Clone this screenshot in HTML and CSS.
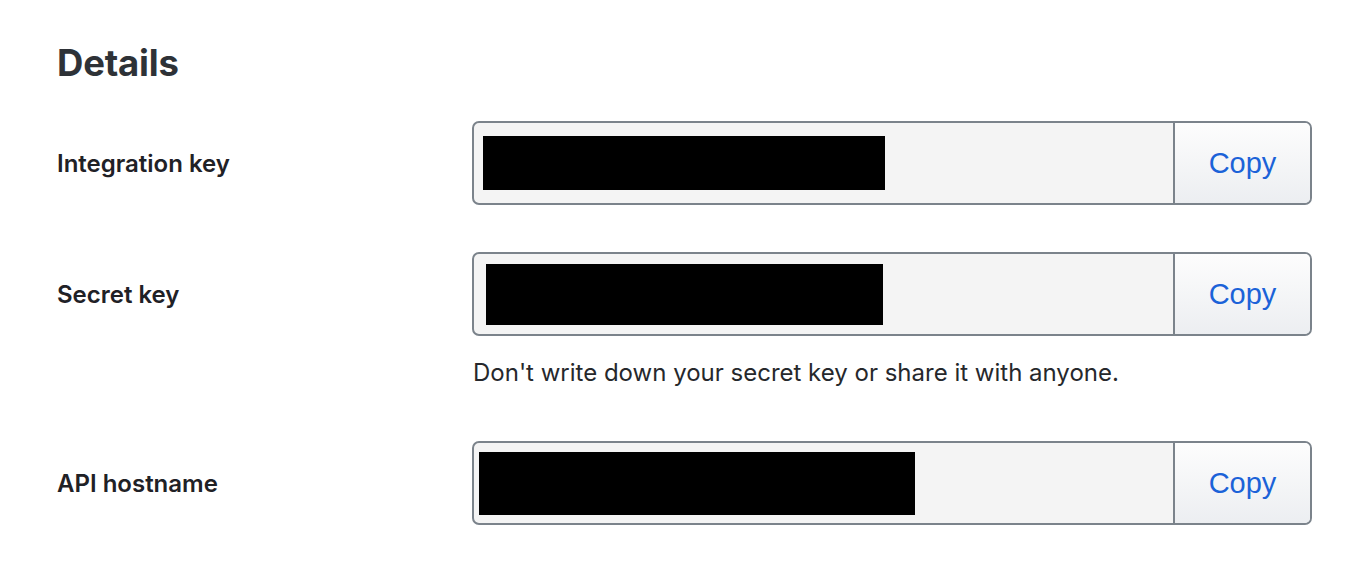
FILE: index.html
```html
<!DOCTYPE html>
<html>
<head>
<meta charset="utf-8">
<link rel="stylesheet" href="styles.css">
</head>
<body>
<main class="page">
  <h1 class="title">Details</h1>
  <div class="row">
    <label class="label">Integration key</label>
    <div class="field">
      <div class="value"><span class="redact redact-1"></span></div>
      <button class="copy">Copy</button>
    </div>
  </div>
  <div class="row row-secret">
    <label class="label">Secret key</label>
    <div class="field">
      <div class="value"><span class="redact redact-2"></span></div>
      <button class="copy">Copy</button>
    </div>
  </div>
  <p class="hint">Don't write down your secret key or share it with anyone.</p>
  <div class="row">
    <label class="label">API hostname</label>
    <div class="field">
      <div class="value"><span class="redact redact-3"></span></div>
      <button class="copy">Copy</button>
    </div>
  </div>
</main>
</body>
</html>
```
FILE: styles.css
```css
html, body {
  margin: 0;
  background: #ffffff;
}
.page {
  padding: 38px 0 0 57px;
  font-family: Inter, "Noto Sans", sans-serif;
}
.title {
  margin: 0;
  font-size: 36.5px;
  line-height: 50px;
  font-weight: 700;
  color: #2e3237;
  letter-spacing: -0.2px;
}
.row {
  display: flex;
  align-items: center;
  margin-top: 33px;
}
.row-secret {
  margin-top: 47px;
}
.label {
  width: 415px;
  flex: none;
  font-size: 24px;
  line-height: 30px;
  padding-top: 2px;
  font-weight: 600;
  color: #1f2126;
}
.field {
  width: 840px;
  height: 84px;
  box-sizing: border-box;
  border: 2px solid #7b838b;
  border-radius: 7px;
  display: flex;
  overflow: hidden;
  background: #f4f4f4;
}
.value {
  flex: 1;
  display: flex;
  align-items: center;
}
.redact {
  display: block;
  background: #000;
}
.redact-1 { width: 402px; height: 54px; margin-left: 9px; }
.redact-2 { width: 397px; height: 61px; margin-left: 12px; }
.redact-3 { width: 436px; height: 63px; margin-left: 5px; }
.copy {
  width: 137px;
  flex: none;
  border: 0;
  border-left: 2px solid #7b838b;
  background: linear-gradient(#fdfdfd, #eceef1);
  color: #1b62d8;
  font-family: "Liberation Sans", Arial, sans-serif;
  font-size: 29px;
  padding: 0;
}
.hint {
  margin: 22px 0 0 416px;
  font-size: 24px;
  line-height: 30px;
  color: #26282c;
}
.hint + .row {
  margin-top: 53px;
}
```
